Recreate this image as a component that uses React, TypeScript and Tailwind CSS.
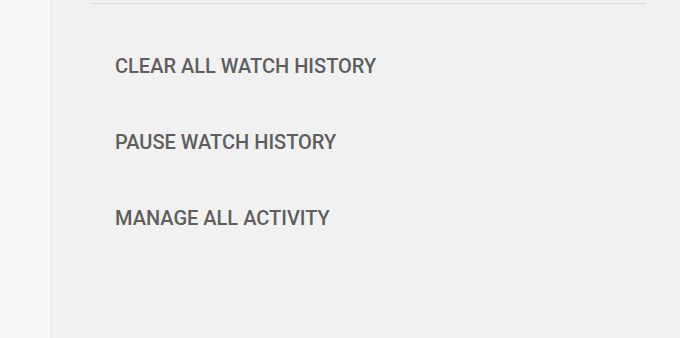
export default function App() {
  const items = ["CLEAR ALL WATCH HISTORY", "PAUSE WATCH HISTORY", "MANAGE ALL ACTIVITY"];
  return (
    <div className="flex h-[338px] w-[680px] overflow-hidden bg-[#f1f1f1]" style={{ fontFamily: "Roboto, 'Liberation Sans', sans-serif" }}>
      <div className="w-[51px] shrink-0 border-r border-[#e9e9e9] bg-[#f8f8f8]" />
      <div className="flex-1">
        <div className="ml-[40px] mr-[34px] mt-[3px] h-[1px] bg-[#d6d6d6]" />
        <div className="flex flex-col pt-[50px] pl-[64px] gap-[52px]">
          {items.map((t) => (
            <div key={t} className="h-[24px] leading-[24px] text-[20px] font-medium text-[#5e5e5e]">
              {t}
            </div>
          ))}
        </div>
      </div>
    </div>
  );
}
